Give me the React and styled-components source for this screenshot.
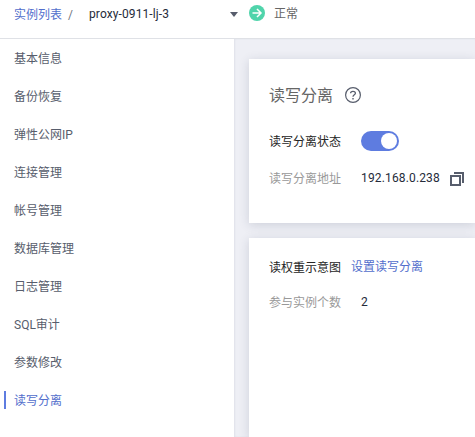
import React from "react";
import styled, { createGlobalStyle } from "styled-components";

const GlobalStyle = createGlobalStyle`
  *, *::before, *::after { box-sizing: border-box; }
  body {
    margin: 0;
    overflow: hidden;
    background: #fff;
    font-family: Roboto, "Noto Sans CJK SC", sans-serif;
    font-size: 12px;
    line-height: 18px;
    color: #252b3a;
  }
`;

const Page = styled.div`
  display: flex;
  flex-direction: column;
  width: 100%;
  height: 100vh;
  overflow: hidden;
`;

const Header = styled.header`
  display: flex;
  align-items: flex-start;
  flex: none;
  height: 39px;
  padding: 5px 0 0 14px;
  border-bottom: 1px solid #dfe1e6;
  white-space: nowrap;
`;

const Link = styled.a`
  color: #526ecc;
  text-decoration: none;
  cursor: pointer;
`;

const Breadcrumb = styled.div`
  display: flex;
  padding-top: 1px;
`;

const Separator = styled.span`
  width: 21px;
  margin-left: 6px;
  color: #71757f;
`;

const InstancePicker = styled.button`
  display: flex;
  align-items: center;
  justify-content: space-between;
  width: 149px;
  height: 18px;
  padding: 0;
  border: 0;
  background: none;
  font: inherit;
  letter-spacing: 0.1px;
  color: #252b3a;
`;

const Caret = styled.svg`
  display: block;
  width: 8px;
  height: 5px;
`;

const Status = styled.div`
  display: flex;
  align-items: center;
  gap: 9px;
  height: 16px;
  margin-left: 11px;
  color: #666;
`;

const StatusText = styled.span`
  padding-top: 2px;
`;

const Icon = styled.svg`
  display: block;
  flex: none;
  width: ${(p) => p.$size}px;
  height: ${(p) => p.$size}px;
`;

const Body = styled.div`
  display: flex;
  flex: 1;
  min-height: 0;
`;

const Sidebar = styled.nav`
  flex: none;
  width: 234px;
  background: #fff;
`;

const NavItem = styled.a`
  display: flex;
  align-items: center;
  height: 38px;
  padding: 2px 0 0 4px;
  color: ${(p) => (p.$active ? "#526ecc" : "#575d6c")};
  cursor: pointer;

  &::before {
    content: "";
    width: 2px;
    height: 18px;
    margin: 0 8px 2px 0;
    background: ${(p) => (p.$active ? "#5e7ce0" : "transparent")};
  }
`;

const Main = styled.main`
  display: flex;
  flex-direction: column;
  gap: 15px;
  flex: 1;
  min-width: 0;
  padding: 20px 0 0 15px;
  background: #eeeff5;
  box-shadow: inset 1px 0 2px rgba(40, 50, 80, 0.07);
`;

const Card = styled.section`
  flex: ${(p) => (p.$height ? "none" : "1")};
  height: ${(p) => (p.$height ? `${p.$height}px` : "auto")};
  padding: ${(p) => p.$top}px 0 0 20px;
  background: #fff;
  box-shadow: 0 2px 10px rgba(40, 50, 80, 0.16);
  white-space: nowrap;
`;

const Title = styled.h2`
  display: flex;
  align-items: center;
  gap: 12px;
  height: 24px;
  margin: 0 0 24px;
  font-size: 16px;
  font-weight: 400;
  color: #666;
`;

const TitleText = styled.span`
  padding-top: 2px;
`;

const Field = styled.div`
  display: flex;
  align-items: center;
  height: 20px;
  margin-bottom: ${(p) => p.$gap || 0}px;
`;

const Label = styled.span`
  width: ${(p) => p.$width || 92}px;
  padding-top: 1px;
  color: ${(p) => (p.$strong ? "#252525" : "#999")};
`;

const Value = styled.span`
  letter-spacing: 0.15px;
`;

const Switch = styled.button`
  display: flex;
  justify-content: flex-end;
  align-items: center;
  width: 38px;
  height: 20px;
  padding: 2px;
  border: 0;
  border-radius: 10px;
  background: #5e7ce0;

  &::before {
    content: "";
    width: 16px;
    height: 16px;
    border-radius: 50%;
    background: #fff;
  }
`;

const CopyButton = styled.button`
  margin-left: 10px;
  padding: 2px 0 0;
  border: 0;
  background: none;
`;

const menu = [
  "基本信息",
  "备份恢复",
  "弹性公网IP",
  "连接管理",
  "帐号管理",
  "数据库管理",
  "日志管理",
  "SQL审计",
  "参数修改",
  "读写分离",
];

function RunningIcon() {
  return (
    <Icon $size={16} viewBox="0 0 16 16" fill="none">
      <circle cx="8" cy="8" r="8" fill="#50d4ab" />
      <path d="M3.5 8H12M8 4l4 4-4 4" stroke="#fff" strokeWidth="1.5" />
    </Icon>
  );
}

function HelpIcon() {
  return (
    <Icon $size={16} viewBox="0 0 16 16" fill="none" stroke="#575d6c">
      <circle cx="8" cy="8" r="7.4" strokeWidth="1.2" />
      <path d="M5.6 6.3C5.6 4.9 6.6 4.3 8 4.3s2.4.7 2.4 1.9c0 1.5-2.4 1.6-2.4 3.6" strokeWidth="1.3" />
      <path d="M8 11v1.6" strokeWidth="1.4" />
    </Icon>
  );
}

function CopyIcon() {
  return (
    <Icon $size={14} viewBox="0 0 14 14" fill="none" stroke="#575d6c">
      <path d="M1 4h9v9H1z" strokeWidth="2" />
      <path d="M4 1h9v10" strokeWidth="2" />
    </Icon>
  );
}

export default function App() {
  return (
    <Page>
      <GlobalStyle />
      <Header>
        <Breadcrumb>
          <Link>实例列表</Link>
          <Separator>/</Separator>
        </Breadcrumb>
        <InstancePicker>
          proxy-0911-lj-3
          <Caret viewBox="0 0 8 5">
            <path d="M0 0h8L4 5z" fill="#575d6c" />
          </Caret>
        </InstancePicker>
        <Status>
          <RunningIcon />
          <StatusText>正常</StatusText>
        </Status>
      </Header>
      <Body>
        <Sidebar>
          {menu.map((name) => (
            <NavItem key={name} $active={name === "读写分离"}>
              {name}
            </NavItem>
          ))}
        </Sidebar>
        <Main>
          <Card $height={164} $top={24}>
            <Title>
              <TitleText>读写分离</TitleText>
              <HelpIcon />
            </Title>
            <Field $gap={17}>
              <Label $strong>读写分离状态</Label>
              <Switch role="switch" aria-checked="true" />
            </Field>
            <Field>
              <Label>读写分离地址</Label>
              <Value>192.168.0.238</Value>
              <CopyButton>
                <CopyIcon />
              </CopyButton>
            </Field>
          </Card>
          <Card $top={19}>
            <Field $gap={15}>
              <Label $strong $width={82}>读权重示意图</Label>
              <Link>设置读写分离</Link>
            </Field>
            <Field>
              <Label>参与实例个数</Label>
              <Value>2</Value>
            </Field>
          </Card>
        </Main>
      </Body>
    </Page>
  );
}
